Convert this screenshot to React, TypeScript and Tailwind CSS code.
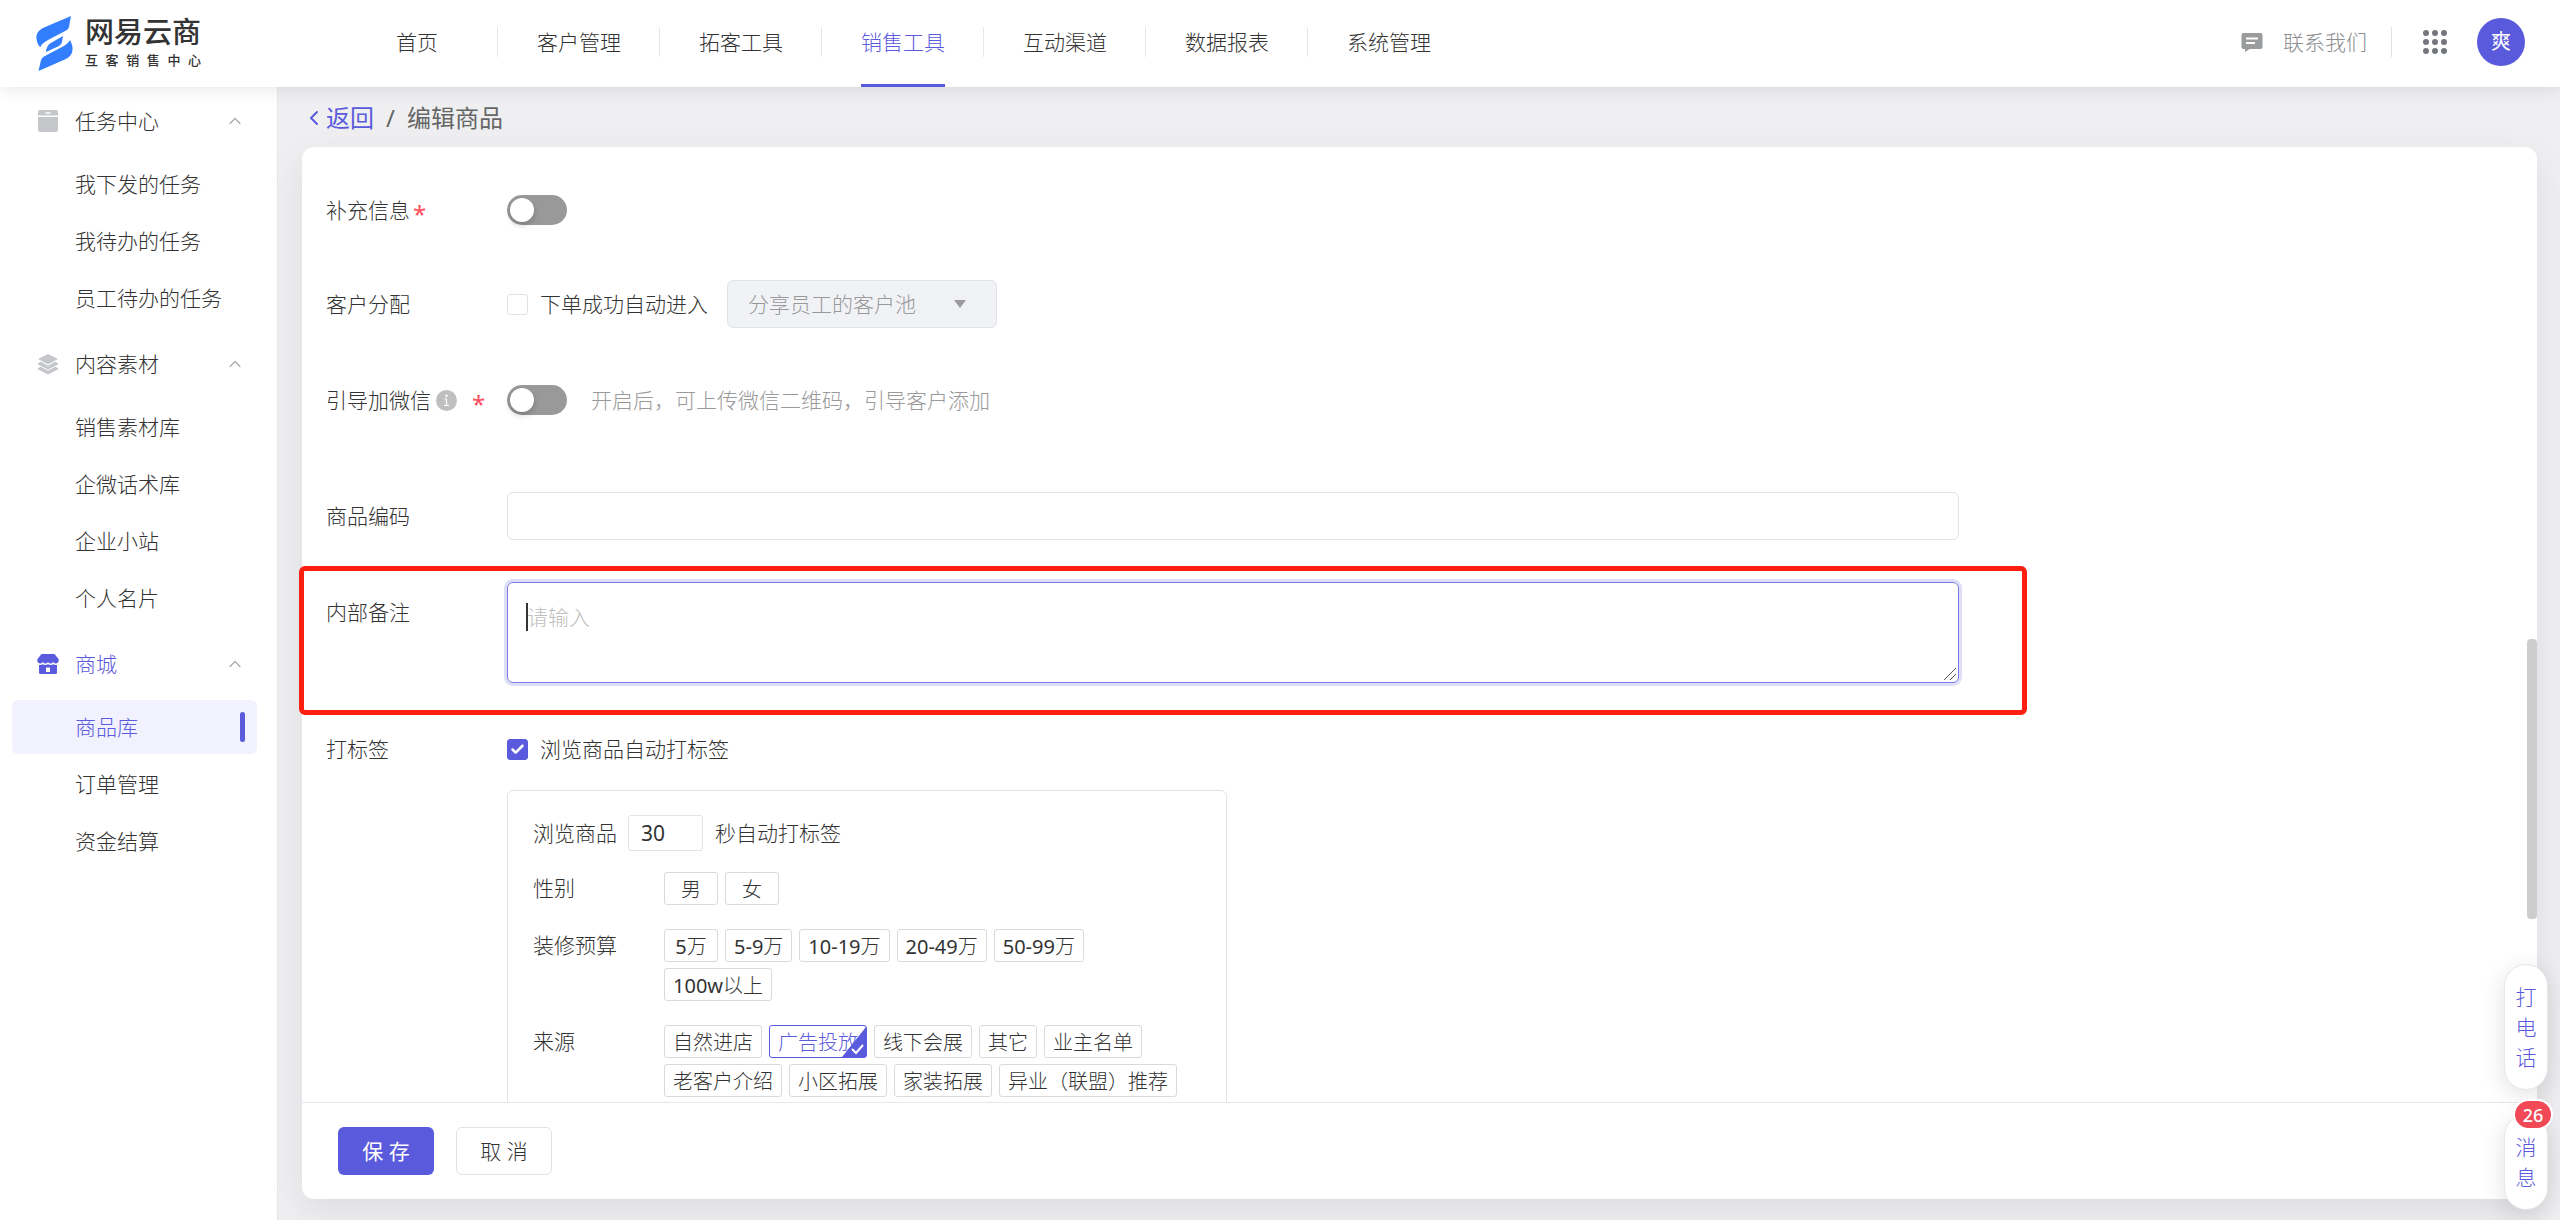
import { useState } from "react";
import { Check, ChevronLeft, ChevronUp } from "lucide-react";
import clsx from "clsx";

type Group = {
  name: string;
  icon: "task" | "layers" | "shop";
  active?: boolean;
  items: string[];
};

const navItems = ["首页", "客户管理", "拓客工具", "销售工具", "互动渠道", "数据报表", "系统管理"];

const groups: Group[] = [
  { name: "任务中心", icon: "task", items: ["我下发的任务", "我待办的任务", "员工待办的任务"] },
  { name: "内容素材", icon: "layers", items: ["销售素材库", "企微话术库", "企业小站", "个人名片"] },
  { name: "商城", icon: "shop", active: true, items: ["商品库", "订单管理", "资金结算"] },
];

const tagGroups = [
  { name: "性别", tags: ["男", "女"] },
  { name: "装修预算", tags: ["5万", "5-9万", "10-19万", "20-49万", "50-99万", "100w以上"] },
  {
    name: "来源",
    tags: [
      "自然进店",
      "广告投放",
      "线下会展",
      "其它",
      "业主名单",
      "老客户介绍",
      "小区拓展",
      "家装拓展",
      "异业（联盟）推荐",
    ],
  },
];

function Logo() {
  return (
    <a href="#" className="flex items-center gap-3">
      <svg width="37" height="56" viewBox="0 0 37 56" fill="#337eff">
        <path d="M35 0 L33 11 Q32.500 13 30.500 14.200 L12 24 Q5 28 4.500 31 L3 30 Q-1 23 1 18 Q2.500 14 8 11.500 Z" />
        <path d="M27 20 L26 26 Q25.500 28.500 23 30 L10 36 Q10 31 14 27.500 Z" />
        <path d="M2.500 55 L5 44 Q5.500 42 8 40.500 L25 31.500 Q32 28 34 24 Q37 30 36.500 34 Q36 40 30 43 Z" />
      </svg>
      <span className="flex w-[116px] flex-col pb-1 text-[#333]">
        <span className="text-[29px] leading-8 font-medium">网易云商</span>
        <span className="mt-1 flex justify-between text-[13px] leading-4 font-medium">
          {[..."互客销售中心"].map((char) => (
            <span key={char}>{char}</span>
          ))}
        </span>
      </span>
    </a>
  );
}

function Header() {
  return (
    <header className="relative z-20 flex h-[87px] shrink-0 items-center bg-white pr-[35px] pl-9 shadow-[0_0_18px_rgba(0,0,0,0.12)]">
      <div className="w-[300px]">
        <Logo />
      </div>
      <nav className="flex h-full">
        {navItems.map((item, index) => (
          <a
            key={item}
            href="#"
            className={clsx(
              "relative flex w-[162px] items-center justify-center pb-[3px]",
              item === "销售工具" ? "text-[#5a5adc]" : "text-[#333]"
            )}
          >
            {item}
            {item === "销售工具" && (
              <span className="absolute bottom-0 h-[3px] w-[84px] bg-[#5a5adc]" />
            )}
            {index < navItems.length - 1 && (
              <span className="absolute right-0 h-[30px] w-px bg-[#e6e7eb]" />
            )}
          </a>
        ))}
      </nav>
      <div className="ml-auto flex items-center pb-[3px]">
        <a href="#" className="flex items-center gap-5 text-[#8c8e91]">
          <svg width="22" height="19" viewBox="0 0 21 19" fill="#999b9d">
            <path d="M2 0 H19 Q21 0 21 2 V14 Q21 16 19 16 H8 L3.500 19 V16 H2 Q0 16 0 14 V2 Q0 0 2 0 Z" />
            <path d="M4.500 5.500 H16.500 M4.500 10 H13.500" stroke="#fff" strokeWidth="1.800" />
          </svg>
          联系我们
        </a>
        <span className="mr-[25px] ml-6 h-[30px] w-px bg-[#e1e2e6]" />
        <button type="button" aria-label="应用" className="mr-[30px] ml-[6px]">
          <svg width="24" height="24" viewBox="0 0 24 24" fill="#73767c">
            {[3, 12, 21].map((cy) =>
              [3, 12, 21].map((cx) => <circle key={`${cx}-${cy}`} cx={cx} cy={cy} r="3" />)
            )}
          </svg>
        </button>
        <button
          type="button"
          className="flex size-12 items-center justify-center rounded-full bg-[#5a5adc] text-xl font-normal text-white"
        >
          爽
        </button>
      </div>
    </header>
  );
}

function GroupIcon({ icon }: { icon: Group["icon"] }) {
  if (icon === "task") {
    return (
      <svg width="22" height="22" viewBox="0 0 22 22" fill="#c6c7cb">
        <path d="M3 0 H19 Q21 0 21 2 V5.500 H1 V2 Q1 0 3 0 Z" />
        <path d="M1 7 H21 V19.500 Q21 22 18.500 22 H3.500 Q1 22 1 19.500 Z" />
        <path d="M8.500 3 H13.500" stroke="#fff" strokeWidth="1.500" />
      </svg>
    );
  }
  if (icon === "layers") {
    return (
      <svg width="22" height="22" viewBox="0 0 22 22" fill="#c6c7cb">
        <path d="M11 1 L21 6 L11 11.500 L1 6 Z" />
        <path d="M1 10 L4 8.800 L11 12.800 L18 8.800 L21 10 L21 11.500 L11 16.500 L1 11.500 Z" />
        <path d="M1 15 L4 13.800 L11 17.600 L18 13.800 L21 15 L21 16.500 L11 21.500 L1 16.500 Z" />
      </svg>
    );
  }
  return (
    <svg width="22" height="22" viewBox="0 0 22 22" fill="#5a5adc">
      <path d="M4.500 1 H17.500 L21.500 6 Q22.500 10 19 10.500 Q17 10.500 16.300 9 Q15 10.500 13.600 10.500 Q12 10.500 11 9 Q10 10.500 8.400 10.500 Q7 10.500 5.700 9 Q5 10.500 3 10.500 Q-0.500 10 0.500 6 Z" />
      <path d="M2 12 Q4.500 12.200 5.700 11.200 Q8 12.800 11 11.200 Q14 12.800 16.300 11.200 Q17.500 12.200 20 12 V19.500 Q20 21 18.500 21 H3.500 Q2 21 2 19.500 Z" />
      <path d="M9 14.500 H13 V19 H9 Z" fill="#fff" />
    </svg>
  );
}

function Sidebar() {
  return (
    <aside className="w-[278px] shrink-0 border-r border-[#e6e7ea] bg-white pt-[6px]">
      <nav className="flex flex-col gap-[11px]">
        {groups.map((group) => (
          <div key={group.name}>
            <button
              type="button"
              className={clsx(
                "mb-2 flex h-14 w-full items-center pr-8 pl-[37px]",
                group.active ? "text-[#5a5adc]" : "text-[#333]"
              )}
            >
              <GroupIcon icon={group.icon} />
              <span className="ml-4">{group.name}</span>
              <ChevronUp size={20} strokeWidth={1.5} className="ml-auto text-[#aaa]" />
            </button>
            <ul className="flex flex-col gap-[3px] pr-5 pl-3">
              {group.items.map((item) => (
                <li key={item}>
                  <a
                    href="#"
                    className={clsx(
                      "flex h-[54px] items-center justify-between rounded-md pr-3 pl-[63px]",
                      item === "商品库" ? "bg-[#f2f2ff] text-[#5a5adc]" : "text-[#333]"
                    )}
                  >
                    {item}
                    {item === "商品库" && (
                      <span className="h-[30px] w-[5px] rounded-sm bg-[#5a5adc]" />
                    )}
                  </a>
                </li>
              ))}
            </ul>
          </div>
        ))}
      </nav>
    </aside>
  );
}

function Required() {
  return <span className="pt-2 text-2xl leading-6 font-normal text-[#ff4d5c]">*</span>;
}

function Switch({ id }: { id: string }) {
  const [on, setOn] = useState(false);

  return (
    <button
      id={id}
      type="button"
      role="switch"
      aria-checked={on}
      onClick={() => setOn(!on)}
      className={clsx(
        "flex h-[30px] w-[60px] items-center rounded-full px-[3px]",
        on ? "justify-end bg-[#5a5adc]" : "bg-[#999]"
      )}
    >
      <span className="size-6 rounded-full bg-white shadow-[0_3px_6px_rgba(0,0,0,0.2)]" />
    </button>
  );
}

function CheckBox({ id, defaultChecked }: { id: string; defaultChecked?: boolean }) {
  return (
    <span className="relative flex size-[21px]">
      <input
        id={id}
        type="checkbox"
        defaultChecked={defaultChecked}
        className="peer size-[21px] appearance-none rounded-[3px] border border-[#e1e3e6] bg-white checked:border-[#5a5adc] checked:bg-[#5a5adc]"
      />
      <Check
        size={15}
        strokeWidth={4}
        className="pointer-events-none absolute top-[3px] left-[3px] hidden text-white peer-checked:block"
      />
    </span>
  );
}

function Tag({ name }: { name: string }) {
  const [selected, setSelected] = useState(name === "广告投放");

  return (
    <button
      type="button"
      aria-pressed={selected}
      onClick={() => setSelected(!selected)}
      className={clsx(
        "relative h-[33px] min-w-[54px] rounded-[3px] border px-2 pt-0.5 text-xl leading-[29px]",
        selected ? "border-[#5a5adc] text-[#5a5adc]" : "border-[#d9dadd] text-[#333]"
      )}
    >
      {/* latin characters are set one weight heavier than the Chinese ones */}
      {name.split(/([\w-]+)/).map((part, index) =>
        index % 2 ? (
          <span key={index} className="font-normal">
            {part}
          </span>
        ) : (
          part
        )
      )}
      {selected && (
        <svg width="24" height="32" viewBox="0 0 24 32" className="absolute right-0 bottom-0">
          <path d="M24 2 V32 H0 Z" fill="#5a5adc" />
          <path d="M10 24 L14 28 L21 20" fill="none" stroke="#fff" strokeWidth="2" />
        </svg>
      )}
    </button>
  );
}

function TagPanel() {
  return (
    <div className="w-[720px] rounded-md border border-[#e1e3e6] px-[25px] pt-6 pb-6">
      <div className="flex items-center">
        <label htmlFor="seconds">浏览商品</label>
        <input
          id="seconds"
          defaultValue="30"
          className="mr-3 ml-[11px] h-9 w-[75px] rounded-[3px] border border-[#e1e3e6] px-3 font-normal"
        />
        <span>秒自动打标签</span>
      </div>
      {tagGroups.map((group, index) => (
        <div key={group.name} className={clsx("flex", index === 0 ? "mt-[21px]" : "mt-6")}>
          <span className="w-[131px] shrink-0 leading-[33px]">{group.name}</span>
          <div className="mr-3 flex flex-wrap gap-x-[7px] gap-y-[6px]">
            {group.tags.map((tag) => (
              <Tag key={tag} name={tag} />
            ))}
          </div>
        </div>
      ))}
    </div>
  );
}

function ProductForm() {
  return (
    <form className="relative min-h-0 flex-1 overflow-hidden px-6 pt-[39px] text-[#333]">
      <div className="flex h-12 items-center">
        <label htmlFor="extra" className="flex w-[181px] shrink-0 items-center gap-[3px]">
          补充信息
          <Required />
        </label>
        <Switch id="extra" />
      </div>

      <div className="mt-[46px] flex h-12 items-center">
        <span className="w-[181px] shrink-0">客户分配</span>
        <CheckBox id="assign" />
        <label htmlFor="assign" className="ml-3">
          下单成功自动进入
        </label>
        <div className="relative ml-[19px] w-[270px]">
          <select
            disabled
            aria-label="客户池"
            className="h-12 w-full appearance-none rounded-md border border-[#e1e3e6] bg-[#f1f2f5] px-5 text-[#999] opacity-100"
          >
            <option>分享员工的客户池</option>
          </select>
          <svg
            width="12"
            height="8"
            viewBox="0 0 12 8"
            fill="#999"
            className="pointer-events-none absolute top-5 right-[31px]"
          >
            <path d="M0 0 H12 L6 8 Z" />
          </svg>
        </div>
      </div>

      <div className="mt-12 flex h-12 items-center">
        <label htmlFor="wechat" className="flex w-[181px] shrink-0 items-center">
          引导加微信
          <svg width="21" height="21" viewBox="0 0 21 21" className="mr-[15px] ml-[5px]">
            <circle cx="10.5" cy="10.5" r="10.5" fill="#bfbfbf" />
            <path d="M8.500 9 H10.500 V15.500 M8 15.500 H13" fill="none" stroke="#fff" strokeWidth="1.200" />
            <circle cx="10.500" cy="5.800" r="1.200" fill="#fff" />
          </svg>
          <Required />
        </label>
        <Switch id="wechat" />
        <span className="ml-6 text-[#999]">开启后，可上传微信二维码，引导客户添加</span>
      </div>

      <div className="mt-[68px] flex h-12 items-center">
        <label htmlFor="code" className="w-[181px] shrink-0">
          商品编码
        </label>
        <input
          id="code"
          className="h-12 max-w-[1452px] flex-1 rounded-md border border-[#e1e3e6] px-5"
        />
      </div>

      <div className="mt-[42px] flex">
        <label htmlFor="note" className="w-[181px] shrink-0 pt-[14px] leading-8">
          内部备注
        </label>
        <div className="relative flex max-w-[1452px] flex-1">
          <textarea
            id="note"
            placeholder="请输入"
            className="h-[101px] w-full resize-none rounded-md border border-[#7a7ae2] px-[19px] py-[18px] leading-8 ring-3 ring-[#dedef8] outline-none placeholder:text-[#bfbfbf]"
          />
          <span className="absolute top-[21px] left-[19px] h-7 w-0.5 bg-[#333]" />
          <svg
            width="12"
            height="12"
            viewBox="0 0 12 12"
            className="pointer-events-none absolute right-[3px] bottom-[3px]"
          >
            <path d="M0 12 L12 0 M6 12 L12 6" stroke="#555" strokeWidth="1" />
          </svg>
        </div>
      </div>

      <div className="mt-[42px] flex">
        <span className="w-[181px] shrink-0 leading-[48px]">打标签</span>
        <div>
          <div className="flex h-12 items-center">
            <CheckBox id="auto-tag" defaultChecked />
            <label htmlFor="auto-tag" className="ml-3">
              浏览商品自动打标签
            </label>
          </div>
          <div className="mt-[17px]">
            <TagPanel />
          </div>
        </div>
      </div>
    </form>
  );
}

function FloatingActions() {
  return (
    <div className="absolute right-3 bottom-[10px] z-20 flex flex-col gap-6 text-[#5a5adc]">
      <button
        type="button"
        className="w-11 rounded-full border border-[#e6e7ea] bg-white px-[10px] py-[17px] leading-[30px] shadow-[0_6px_24px_rgba(0,0,0,0.12)]"
      >
        打电话
      </button>
      <button
        type="button"
        className="relative w-11 rounded-full border border-[#e6e7ea] bg-white px-[10px] py-[17px] leading-[30px] shadow-[0_6px_24px_rgba(0,0,0,0.12)]"
      >
        消息
        <span className="absolute -top-4 -right-[6px] flex h-[31px] w-10 items-center justify-center rounded-full border-2 border-white bg-[#f24957] text-lg font-medium text-white">
          26
        </span>
      </button>
    </div>
  );
}

export default function App() {
  return (
    <div className="relative flex h-screen flex-col overflow-hidden bg-[#efeff1] font-['Noto_Sans','Noto_Sans_CJK_SC',sans-serif] text-[21px] leading-8 font-light">
      <Header />
      <div className="flex min-h-0 flex-1">
        <Sidebar />
        <main className="flex min-w-0 flex-1 flex-col pr-[23px] pb-[21px] pl-6">
          <div className="flex h-[60px] items-center pt-0.5 text-2xl font-normal text-[#666]">
            <a href="#" className="flex items-center text-[#5a5adc]">
              <ChevronLeft size={24} />
              返回
            </a>
            <span className="mx-3">/</span>
            <span>编辑商品</span>
          </div>
          <section className="relative flex min-h-0 flex-1 flex-col rounded-xl bg-white shadow-[0_12px_36px_rgba(0,0,0,0.08)]">
            <ProductForm />
            <footer className="flex h-[97px] shrink-0 items-center gap-[22px] border-t border-[#e6e7ea] px-9">
              <button type="button" className="h-12 w-24 rounded-md bg-[#5a5adc] font-normal text-white">
                保 存
              </button>
              <button
                type="button"
                className="h-12 w-24 rounded-md border border-[#e1e3e6] text-[#333]"
              >
                取 消
              </button>
            </footer>
            <div className="absolute top-[492px] right-0 h-[280px] w-[10px] rounded bg-[#cdcdcd]" />
            {/* highlighted field */}
            <div className="pointer-events-none absolute top-[419px] -left-[3px] h-[149px] w-[1728px] rounded-md border-[5px] border-[#ff1f10]" />
          </section>
        </main>
      </div>
      <FloatingActions />
    </div>
  );
}
